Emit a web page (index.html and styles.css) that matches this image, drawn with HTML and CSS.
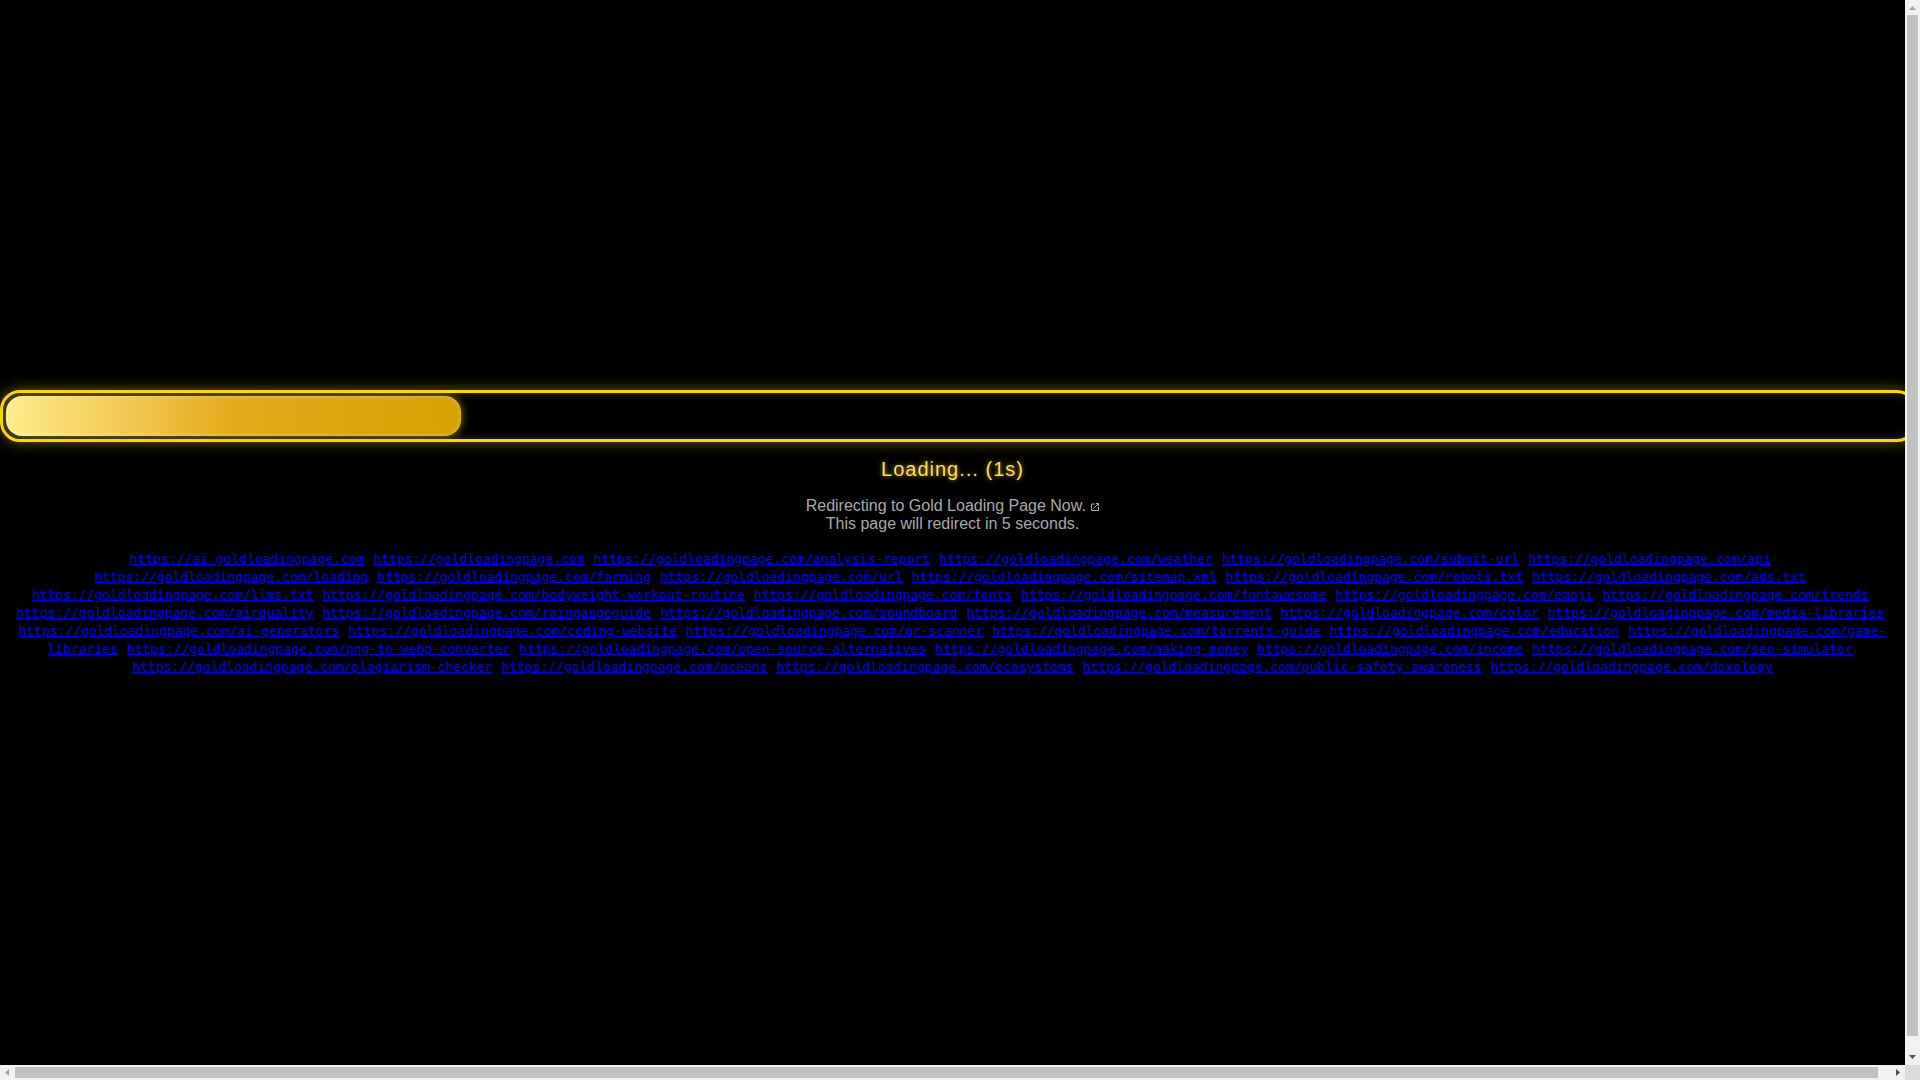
FILE: index.html
```html
<!DOCTYPE html>
<html lang="en">
<head>
    <meta charset="UTF-8">
    <meta name="viewport" content="width=device-width, initial-scale=1.0">
    <title>Gold Loading Page</title>
    <link rel="stylesheet" href="styles.css">
</head>
<body>
    <div class="viewport">
        <main class="page">
            <!-- Progress bar -->
            <div class="loading-bar">
                <div class="loading-fill" style="width: 23.9%"></div>
            </div>
            <div class="loading-text">Loading... (1s)</div>

            <p class="redirect">
                Redirecting to Gold Loading Page Now.
                <svg class="external" viewBox="0 0 8 8" aria-hidden="true"><path d="M4 1H.5v6.500h7V4M5 .5h2.500V3M7.500 .5L2.500 5.500"/></svg><br>
                This page will redirect in 5 seconds.
            </p>

            <!-- Site links -->
            <p class="links">
                <a href="https://ai.goldloadingpage.com"><code>https://ai.goldloadingpage.com</code></a>&nbsp;
                <a href="https://goldloadingpage.com"><code>https://goldloadingpage.com</code></a>&nbsp;
                <a href="https://goldloadingpage.com/analysis-report"><code>https://goldloadingpage.com/analysis-report</code></a>&nbsp;
                <a href="https://goldloadingpage.com/weather"><code>https://goldloadingpage.com/weather</code></a>&nbsp;
                <a href="https://goldloadingpage.com/submit-url"><code>https://goldloadingpage.com/submit-url</code></a>&nbsp;
                <a href="https://goldloadingpage.com/api"><code>https://goldloadingpage.com/api</code></a>&nbsp;
                <a href="https://goldloadingpage.com/loading"><code>https://goldloadingpage.com/loading</code></a>&nbsp;
                <a href="https://goldloadingpage.com/farming"><code>https://goldloadingpage.com/farming</code></a>&nbsp;
                <a href="https://goldloadingpage.com/url"><code>https://goldloadingpage.com/url</code></a>&nbsp;
                <a href="https://goldloadingpage.com/sitemap.xml"><code>https://goldloadingpage.com/sitemap.xml</code></a>&nbsp;
                <a href="https://goldloadingpage.com/robots.txt"><code>https://goldloadingpage.com/robots.txt</code></a>&nbsp;
                <a href="https://goldloadingpage.com/ads.txt"><code>https://goldloadingpage.com/ads.txt</code></a>&nbsp;
                <a href="https://goldloadingpage.com/llms.txt"><code>https://goldloadingpage.com/llms.txt</code></a>&nbsp;
                <a href="https://goldloadingpage.com/bodyweight-workout-routine"><code>https://goldloadingpage.com/bodyweight-workout-routine</code></a>&nbsp;
                <a href="https://goldloadingpage.com/fonts"><code>https://goldloadingpage.com/fonts</code></a>&nbsp;
                <a href="https://goldloadingpage.com/fontawesome"><code>https://goldloadingpage.com/fontawesome</code></a>&nbsp;
                <a href="https://goldloadingpage.com/emoji"><code>https://goldloadingpage.com/emoji</code></a>&nbsp;
                <a href="https://goldloadingpage.com/trends"><code>https://goldloadingpage.com/trends</code></a>&nbsp;
                <a href="https://goldloadingpage.com/airquality"><code>https://goldloadingpage.com/airquality</code></a>&nbsp;
                <a href="https://goldloadingpage.com/raingaugeguide"><code>https://goldloadingpage.com/raingaugeguide</code></a>&nbsp;
                <a href="https://goldloadingpage.com/soundboard"><code>https://goldloadingpage.com/soundboard</code></a>&nbsp;
                <a href="https://goldloadingpage.com/measurement"><code>https://goldloadingpage.com/measurement</code></a>&nbsp;
                <a href="https://goldloadingpage.com/color"><code>https://goldloadingpage.com/color</code></a>&nbsp;
                <a href="https://goldloadingpage.com/media-libraries"><code>https://goldloadingpage.com/media-libraries</code></a>&nbsp;
                <a href="https://goldloadingpage.com/ai-generators"><code>https://goldloadingpage.com/ai-generators</code></a>&nbsp;
                <a href="https://goldloadingpage.com/coding-website"><code>https://goldloadingpage.com/coding-website</code></a>&nbsp;
                <a href="https://goldloadingpage.com/qr-scanner"><code>https://goldloadingpage.com/qr-scanner</code></a>&nbsp;
                <a href="https://goldloadingpage.com/torrents-guide"><code>https://goldloadingpage.com/torrents-guide</code></a>&nbsp;
                <a href="https://goldloadingpage.com/education"><code>https://goldloadingpage.com/education</code></a>&nbsp;
                <a href="https://goldloadingpage.com/game-libraries"><code>https://goldloadingpage.com/game-libraries</code></a>&nbsp;
                <a href="https://goldloadingpage.com/png-to-webp-converter"><code>https://goldloadingpage.com/png-to-webp-converter</code></a>&nbsp;
                <a href="https://goldloadingpage.com/open-source-alternatives"><code>https://goldloadingpage.com/open-source-alternatives</code></a>&nbsp;
                <a href="https://goldloadingpage.com/making-money"><code>https://goldloadingpage.com/making-money</code></a>&nbsp;
                <a href="https://goldloadingpage.com/income"><code>https://goldloadingpage.com/income</code></a>&nbsp;
                <a href="https://goldloadingpage.com/seo-simulator"><code>https://goldloadingpage.com/seo-simulator</code></a>&nbsp;
                <a href="https://goldloadingpage.com/plagiarism-checker"><code>https://goldloadingpage.com/plagiarism-checker</code></a>&nbsp;
                <a href="https://goldloadingpage.com/oceans"><code>https://goldloadingpage.com/oceans</code></a>&nbsp;
                <a href="https://goldloadingpage.com/ecosystems"><code>https://goldloadingpage.com/ecosystems</code></a>&nbsp;
                <a href="https://goldloadingpage.com/public-safety-awareness"><code>https://goldloadingpage.com/public-safety-awareness</code></a>&nbsp;
                <a href="https://goldloadingpage.com/doxology"><code>https://goldloadingpage.com/doxology</code></a>
            </p>
        </main>
    </div>

    <!-- Scrollbars -->
    <div class="scrollbar vertical" aria-hidden="true">
        <svg class="arrow off" viewBox="0 0 15 15"><path d="M4 10L7.500 6L11 10z"/></svg>
        <div class="track"><div class="thumb" style="height: 98.6%"></div></div>
        <svg class="arrow" viewBox="0 0 15 15"><path d="M4 5L7.500 9L11 5z"/></svg>
    </div>
    <div class="scrollbar horizontal" aria-hidden="true">
        <svg class="arrow off" viewBox="0 0 15 15"><path d="M9 4L5 7.500L9 11z"/></svg>
        <div class="track"><div class="thumb" style="width: 99.36%"></div></div>
        <svg class="arrow" viewBox="0 0 15 15"><path d="M6 4L10 7.500L6 11z"/></svg>
    </div>
    <div class="corner"></div>
</body>
</html>
```
FILE: styles.css
```css
body {
    display: grid;
    grid-template-columns: minmax(0, 1fr) 15px;
    grid-template-rows: minmax(0, 1fr) 15px;
    height: 100vh;
    margin: 0;
    background: #000;
    color: #aaa;
    font-family: "Liberation Sans", Arial, sans-serif;
    text-align: center;
}
.viewport {
    overflow: hidden;
}
.page {
    display: flex;
    flex-direction: column;
    justify-content: center;
    height: 100vh;
}
.loading-bar {
    width: 100%;
    height: 40px;
    padding: 3px;
    border: 3px solid #ffd700;
    border-radius: 20px;
    box-shadow: 0 0 15px rgba(255, 215, 0, 0.4), inset 0 0 10px rgba(255, 255, 255, 0.2);
}
.loading-fill {
    height: 100%;
    border-radius: 16px;
    background: linear-gradient(to right, #ffec8b, #e4aa1c 50%, #d4a000);
    box-shadow: 0 0 10px rgba(255, 215, 0, 0.6), inset 0 0 5px rgba(255, 255, 255, 0.4);
}
.loading-text {
    margin-top: 16px;
    color: #ffdf50;
    font-size: 20px;
    letter-spacing: 1px;
    text-shadow: 0 0 5px rgba(255, 215, 0, 0.7);
}
.redirect {
    margin: 16px 0 0;
}
.external {
    width: 8px;
    height: 8px;
    margin-left: 1px;
    fill: none;
    stroke: #aaa;
}
.links {
    margin: 16px 0 15px;
}
.links a {
    color: #0000ee;
}
code {
    font-family: "DejaVu Sans Mono", monospace;
    font-size: 13px;
}

/* Scrollbars */
.scrollbar {
    display: flex;
    background: #f1f1f1;
}
.vertical {
    flex-direction: column;
}
.track {
    flex: 1;
}
.thumb {
    background: #c1c1c1;
}
.vertical .thumb {
    margin: 0 2px;
}
.horizontal .track {
    padding: 2px 0;
}
.horizontal .thumb {
    height: 100%;
}
.arrow {
    width: 15px;
    height: 15px;
    fill: #505050;
}
.arrow.off {
    fill: #a3a3a3;
}
.corner {
    background: #dcdcdc;
}
```
